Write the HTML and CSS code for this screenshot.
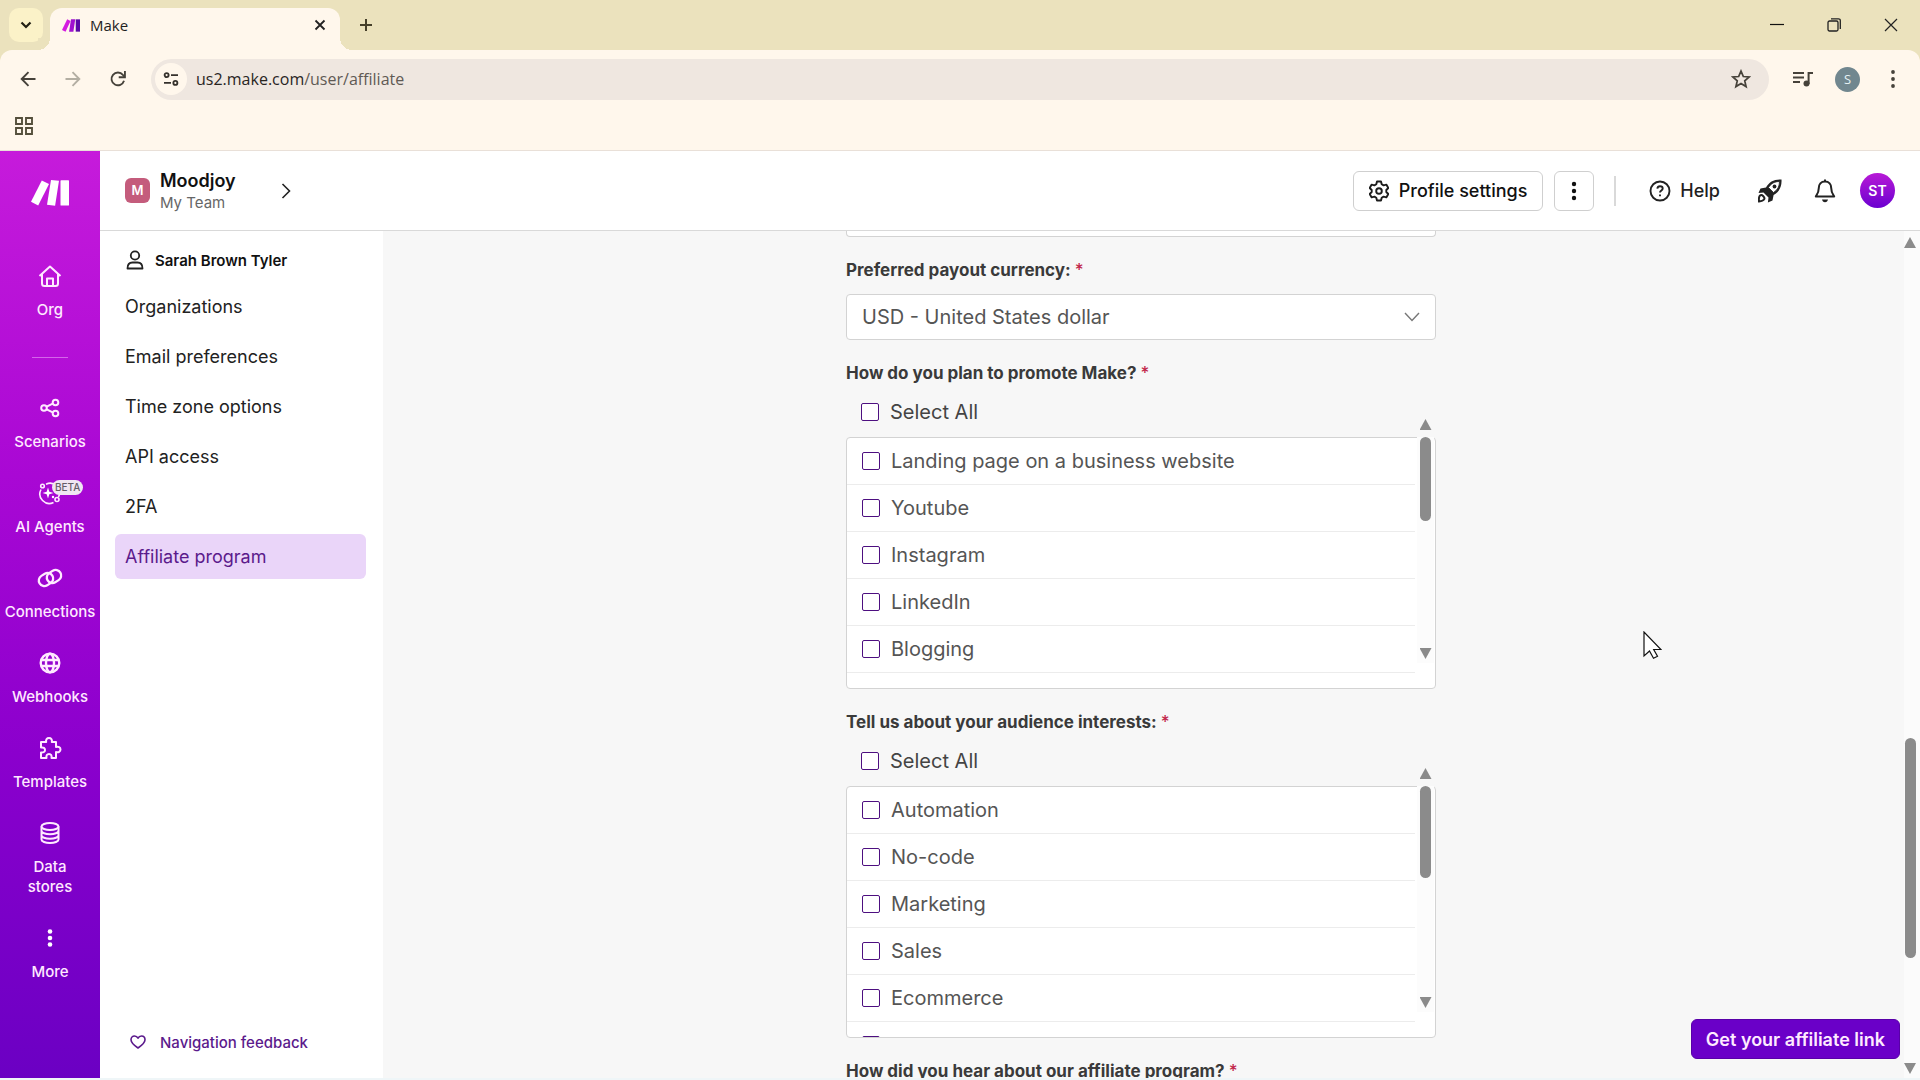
FILE: index.html
```html
<!DOCTYPE html>
<html lang="en">
<head>
<meta charset="utf-8">
<title>Make</title>
<link rel="stylesheet" href="styles.css">
</head>
<body>
<header class="browser">
  <div class="tabstrip">
    <button class="tab-search" aria-label="Search tabs"><svg width="12" height="8" viewBox="0 0 12 8"><path d="M1.500 1.500 6 6l4.500-4.500" fill="none" stroke="#222014" stroke-width="2.200"/></svg></button>
    <div class="tab">
      <svg width="18" height="13" viewBox="0 0 38 26"><path d="M11 0l7 3.500L7.500 26 0 22.500z" fill="#d41be0"/><path d="M19 0h9l-4 26h-9z" fill="#a010d0"/><path d="M29 0h9v26h-9z" fill="#5a08a8"/></svg>
      <span class="tab-title">Make</span>
      <button class="icon-btn" aria-label="Close tab"><svg width="12" height="12" viewBox="0 0 12 12"><path d="M1.500 1.500l9 9m0-9l-9 9" stroke="#222" stroke-width="1.800"/></svg></button>
    </div>
    <button class="icon-btn new-tab" aria-label="New tab"><svg width="14" height="14" viewBox="0 0 14 14"><path d="M7 1v12M1 7h12" stroke="#46402a" stroke-width="2"/></svg></button>
    <div class="window-controls">
      <button class="icon-btn" aria-label="Minimize"><svg width="14" height="14" viewBox="0 0 14 14"><path d="M0 6.500h14" stroke="#111" stroke-width="1.200"/></svg></button>
      <button class="icon-btn" aria-label="Restore"><svg width="14" height="14" viewBox="0 0 14 14"><rect x="1" y="3" width="10" height="10" rx="1.500" fill="none" stroke="#222" stroke-width="1.300"/><path d="M4 .8h7.500a1.800 1.800 0 0 1 1.800 1.800V11" fill="none" stroke="#222" stroke-width="1.300"/></svg></button>
      <button class="icon-btn" aria-label="Close"><svg width="14" height="14" viewBox="0 0 14 14"><path d="M1 1l12 12M13 1L1 13" stroke="#222" stroke-width="1.200"/></svg></button>
    </div>
  </div>
  <div class="toolbar">
    <button class="icon-btn" aria-label="Back"><svg width="16" height="16" viewBox="0 0 16 16"><path d="M15.500 8H2M8.500 1.200L1.700 8l6.800 6.800" fill="none" stroke="#46423a" stroke-width="1.900"/></svg></button>
    <button class="icon-btn" aria-label="Forward"><svg width="16" height="16" viewBox="0 0 16 16"><path d="M.5 8H14M7.500 1.200L14.300 8l-6.800 6.800" fill="none" stroke="#b3aea2" stroke-width="1.900"/></svg></button>
    <button class="icon-btn" aria-label="Reload"><svg width="16" height="16" viewBox="0 0 18 18"><path d="M15.800 11A7.200 7.200 0 1 1 14.500 4.300l2 2.200" fill="none" stroke="#46423a" stroke-width="2.100"/><path d="M16.800 0v7h-7" fill="none" stroke="#46423a" stroke-width="2.100"/></svg></button>
    <div class="omnibox">
      <button class="site-info" aria-label="Site information"><svg width="16" height="14" viewBox="0 0 18 16" fill="none" stroke="#35312c" stroke-width="2.100"><circle cx="4" cy="3.500" r="2.300"/><path d="M9 3.500h8M1 12.500h8"/><circle cx="14" cy="12.500" r="2.300"/></svg></button>
      <a class="url" href="#">us2.make.com<span>/user/affiliate</span></a>
      <button class="icon-btn" aria-label="Bookmark"><svg width="20" height="20" viewBox="0 0 24 24"><path d="M12 2.500l2.800 6.500 7 .6-5.300 4.600 1.600 6.900L12 17.400l-6.100 3.700 1.600-6.900L2.200 9.600l7-.6z" fill="none" stroke="#46423a" stroke-width="2.100"/></svg></button>
    </div>
    <button class="icon-btn" aria-label="Media"><svg width="20" height="16" viewBox="0 0 20 16"><path d="M0 2h11M0 6.500h11M0 11h7" stroke="#46423a" stroke-width="2"/><circle cx="13.500" cy="12.500" r="3" fill="#46423a"/><path d="M15.600 13V2H20" fill="none" stroke="#46423a" stroke-width="2"/></svg></button>
    <button class="profile" aria-label="Browser profile">S</button>
    <button class="icon-btn" aria-label="Browser menu"><svg width="6" height="20" viewBox="0 0 6 20" fill="#46423a"><circle cx="3" cy="3" r="1.900"/><circle cx="3" cy="10" r="1.900"/><circle cx="3" cy="17" r="1.900"/></svg></button>
  </div>
  <div class="bookmarks">
    <button class="icon-btn" aria-label="Apps"><svg width="18" height="18" viewBox="0 0 18 18" fill="none" stroke="#55503c" stroke-width="1.900"><path d="M1 1h6v6H1zM11 1h6v6h-6zM1 11h6v6H1zM11 11h6v6h-6z"/></svg></button>
  </div>
</header>

<div class="app">
  <nav class="rail" aria-label="Main">
    <a class="rail-logo" href="#" aria-label="Make"><svg width="38" height="26" viewBox="0 0 38 26" fill="#fff"><path d="M10.800.6l7.200 3.500L7.200 25.400 0 21.800z"/><path d="M20 0l8 .8-3.900 24.900-8.100-1z"/><rect x="29.500" y=".3" width="8.500" height="25.200" rx=".6"/></svg></a>
    <a class="rail-item" href="#"><svg width="24" height="24" viewBox="0 0 24 24"><path d="M1.500 12L12 2.500 22.500 12M4 10v9.500A2.500 2.500 0 0 0 6.500 22h11a2.500 2.500 0 0 0 2.500-2.500V10M9 22v-7.500h6V22"/></svg><span>Org</span></a>
    <hr class="rail-rule">
    <a class="rail-item" href="#"><svg width="24" height="24" viewBox="0 0 24 24"><circle cx="6" cy="12" r="2.800"/><circle cx="17.500" cy="6.500" r="2.800"/><circle cx="17.500" cy="17.500" r="2.800"/><path d="M8.700 10.700l6-3M8.700 13.300l6 3"/></svg><span>Scenarios</span></a>
    <a class="rail-item" href="#"><svg width="24" height="24" viewBox="0 0 24 24"><g stroke-width="1.600"><path d="M3 8.500A9.500 9.500 0 0 0 15.500 21.500M8 3.200A9.500 9.500 0 0 1 20.500 16"/><circle cx="4.500" cy="5" r="1.800"/><circle cx="19" cy="18.500" r="2"/></g><path d="M10 6.500l1.300 4.200L15.500 12l-4.200 1.300L10 17.500l-1.300-4.200L4.500 12l4.200-1.300z" fill="#fff" stroke="none"/><circle cx="15" cy="16" r="1.200" fill="#fff" stroke="none"/></svg><span>AI Agents</span><b class="beta">BETA</b></a>
    <a class="rail-item" href="#"><svg width="26" height="24" viewBox="0 0 26 24"><g stroke-width="2.300"><rect x="1.500" y="8" width="15" height="11" rx="5.500" transform="rotate(-32 9 13.500)"/><rect x="9.500" y="5" width="15" height="11" rx="5.500" transform="rotate(-32 17 10.500)"/></g></svg><span>Connections</span></a>
    <a class="rail-item" href="#"><svg width="24" height="24" viewBox="0 0 24 24"><g stroke-width="2.400"><circle cx="12" cy="12" r="9.300"/><ellipse cx="12" cy="12" rx="4" ry="9.300"/><path d="M3 9h18M3 15h18"/></g></svg><span>Webhooks</span></a>
    <a class="rail-item" href="#"><svg width="24" height="24" viewBox="0 0 24 24"><path d="M3 6h5.200C7.500 3.500 9 2 11 2s3.500 1.500 2.800 4H18v5c2.500-.7 4.500.5 4.500 2.500S20.500 16.700 18 16v6h-4.500c.5-2.500-.5-4-2.500-4s-3 1.500-2.500 4H3v-5.500c2.500.3 4-.8 4-2.500s-1.500-3-4-2.500z"/></svg><span>Templates</span></a>
    <a class="rail-item" href="#"><svg width="24" height="24" viewBox="0 0 24 24"><ellipse cx="12" cy="5.500" rx="8.500" ry="3.500"/><path d="M3.500 5.500v13c0 2 3.800 3.500 8.500 3.500s8.500-1.500 8.500-3.500v-13M3.500 9.800c0 2 3.800 3.500 8.500 3.500s8.500-1.500 8.500-3.500M3.500 14.200c0 2 3.800 3.500 8.500 3.500s8.500-1.500 8.500-3.500"/></svg><span>Data<br>stores</span></a>
    <a class="rail-item" href="#"><svg width="24" height="24" viewBox="0 0 24 24"><g fill="#fff" stroke="none"><circle cx="12" cy="5.500" r="2.300"/><circle cx="12" cy="12" r="2.300"/><circle cx="12" cy="18.500" r="2.300"/></g></svg><span>More</span></a>
  </nav>

  <div class="workspace">
    <header class="topbar">
      <div class="team-badge">M</div>
      <div class="team"><strong>Moodjoy</strong><span>My Team</span></div>
      <button class="icon-btn" aria-label="Open team menu"><svg width="10" height="16" viewBox="0 0 10 16"><path d="M1.500 1l7 7-7 7" fill="none" stroke="#222" stroke-width="1.600"/></svg></button>
      <div class="top-actions">
        <button class="outline-btn"><svg width="20" height="22" viewBox="0 0 20 22" fill="none" stroke="#1c1c1c" stroke-width="1.900" stroke-linejoin="round"><path d="M8 1.500h4l.7 2.800 1.900 1.100 2.700-.8 2 3.400-2 2v2l2 2-2 3.400-2.700-.8-1.900 1.100-.7 2.800H8l-.7-2.800-1.900-1.100-2.700.8-2-3.400 2-2v-2l-2-2 2-3.400 2.700.8 1.900-1.100z"/><circle cx="10" cy="11" r="2.800"/></svg>Profile settings</button>
        <button class="outline-btn square" aria-label="More options"><svg width="6" height="20" viewBox="0 0 6 20" fill="#111"><circle cx="3" cy="3" r="2.200"/><circle cx="3" cy="10" r="2.200"/><circle cx="3" cy="17" r="2.200"/></svg></button>
        <i class="top-rule"></i>
        <button class="help"><svg width="22" height="22" viewBox="0 0 22 22" fill="none" stroke="#222" stroke-width="1.900"><circle cx="11" cy="11" r="9.500"/><path d="M8.300 8.700C8.500 7 9.600 6.200 11 6.200c1.600 0 2.700 1 2.700 2.300 0 1.900-2.700 2-2.700 4"/><path d="M11 14.400v1.800"/></svg>Help</button>
        <button class="icon-btn rocket" aria-label="What's new"><svg width="24" height="24" viewBox="0 0 24 24"><path d="M23.500.5C16 0 11 3 8 8.500L2.500 9.500.5 14l5-.5 5 5-.6 5 4.600-2 1.100-5.500C21 13 24 8 23.500.5z" fill="#222"/><path d="M21.500 2.500c-5 0-8.500 2-11 6l5 5c4-2.500 6-6 6-11z" fill="#fff" stroke="#222" stroke-width=".8"/><circle cx="16.500" cy="7.500" r="1.900" fill="#222"/><path d="M2 16.500c2-1.500 5.500 2 4 4-1 1.500-5 2-5 2s-.5-4.500 1-6z" fill="#fff" stroke="#222" stroke-width="2"/></svg></button>
        <button class="icon-btn bell" aria-label="Notifications"><svg width="22" height="24" viewBox="0 0 22 24"><path d="M11 2.500c4 0 6.200 3 6.200 6.500 0 4.500 1.300 6 3 8.500H1.800c1.700-2.500 3-4 3-8.500 0-3.500 2.200-6.500 6.200-6.500zM11 .5v2" fill="none" stroke="#222" stroke-width="2" stroke-linejoin="round"/><path d="M8 20.500h6c-.3 1.600-1.400 2.700-3 2.700s-2.700-1.100-3-2.700z" fill="#222"/></svg></button>
        <button class="avatar" aria-label="Account">ST</button>
      </div>
    </header>

    <div class="body">
      <aside class="side">
        <div class="user"><svg width="18" height="20" viewBox="0 0 18 20" fill="none" stroke="#222" stroke-width="1.800"><circle cx="9" cy="5.500" r="4.200"/><path d="M1.500 18.500c0-4 2-6 5-6h5c3 0 5 2 5 6z" stroke-linejoin="round"/></svg>Sarah Brown Tyler</div>
        <nav class="side-nav" aria-label="Profile">
          <a href="#">Organizations</a>
          <a href="#">Email preferences</a>
          <a href="#">Time zone options</a>
          <a href="#">API access</a>
          <a href="#">2FA</a>
          <a href="#" class="active">Affiliate program</a>
        </nav>
        <a class="feedback" href="#"><svg width="16" height="14" viewBox="0 0 16 14"><path d="M8 13C3 9.500 1 7.500 1 4.700 1 2.500 2.600 1 4.500 1 6 1 7.300 1.800 8 3.200 8.700 1.800 10 1 11.500 1 13.400 1 15 2.500 15 4.700 15 7.500 13 9.500 8 13z" fill="none" stroke="#5b1a8c" stroke-width="1.600" stroke-linejoin="round"/></svg>Navigation feedback</a>
      </aside>

      <main class="content">
        <form class="form">
          <div class="field-end"></div>

          <div class="field">
            <label class="title" for="currency">Preferred payout currency:<em>*</em></label>
            <div class="select-wrap">
              <select id="currency"><option>USD - United States dollar</option></select>
              <svg width="16" height="10" viewBox="0 0 16 10"><path d="M1 1l7 7.500L15 1" fill="none" stroke="#777" stroke-width="1.400"/></svg>
            </div>
          </div>

          <fieldset class="field">
            <legend class="title">How do you plan to promote Make?<em>*</em></legend>
            <label class="all"><input type="checkbox">Select All</label>
            <div class="list-wrap">
              <div class="list">
                <label><input type="checkbox">Landing page on a business website</label>
                <label><input type="checkbox">Youtube</label>
                <label><input type="checkbox">Instagram</label>
                <label><input type="checkbox">LinkedIn</label>
                <label><input type="checkbox">Blogging</label>
              </div>
              <div class="bar"><i class="up"></i><i class="thumb"></i><i class="down"></i></div>
            </div>
          </fieldset>

          <fieldset class="field">
            <legend class="title">Tell us about your audience interests:<em>*</em></legend>
            <label class="all"><input type="checkbox">Select All</label>
            <div class="list-wrap">
              <div class="list">
                <label><input type="checkbox">Automation</label>
                <label><input type="checkbox">No-code</label>
                <label><input type="checkbox">Marketing</label>
                <label><input type="checkbox">Sales</label>
                <label><input type="checkbox">Ecommerce</label>
                <label><input type="checkbox" aria-label="Other"></label>
              </div>
              <div class="bar"><i class="up"></i><i class="thumb tall"></i><i class="down"></i></div>
            </div>
          </fieldset>

          <div class="field"><div class="title">How did you hear about our affiliate program?<em>*</em></div></div>
        </form>
        <button class="cta">Get your affiliate link</button>
      </main>
      <div class="page-scroll"><i class="up"></i><i class="track"></i><i class="thumb"></i><i class="track-end"></i><i class="down"></i></div>
    </div>
  </div>
</div>
<svg class="cursor" width="19" height="28" viewBox="0 0 19 28"><path d="M1 1v24l5.500-5 4 7.200 4-2L10.700 18.500H18z" fill="#fff" stroke="#111" stroke-width="1.200"/></svg>
</body>
</html>
```
FILE: styles.css
```css
* { box-sizing: border-box; }
body {
  margin: 0;
  height: 100vh;
  overflow: hidden;
  display: flex;
  flex-direction: column;
  font-family: Inter, "Liberation Sans", sans-serif;
  color: #1f1f1f;
  background: #fff;
}
button { font: inherit; color: inherit; border: 0; padding: 0; background: none; }
a { color: inherit; text-decoration: none; }
svg { display: block; flex: none; }
em { font-style: normal; }
.icon-btn { display: flex; flex: none; align-items: center; justify-content: center; }

/* Browser frame */
.browser { flex: none; background: #ebe2bd; border-bottom: 1px solid #e9e0d8; font-family: "Open Sans", "Noto Sans", sans-serif; }
.tabstrip { display: flex; align-items: center; height: 50px; }
.tab-search { display: flex; align-items: center; justify-content: center; width: 34px; height: 34px; margin-left: 9px; border-radius: 10px; background: #fbf2c8; }
.tab { position: relative; display: flex; align-items: center; align-self: flex-end; width: 290px; height: 42px; margin-left: 7px; padding: 0 14px 8px 12px; border-radius: 12px 12px 0 0; background: #fff7ec; }
.tab::before, .tab::after { content: ""; position: absolute; bottom: 0; width: 12px; height: 12px; }
.tab::before { left: -12px; background: radial-gradient(circle at 0 0, #ebe2bd 12px, #fff7ec 12px); }
.tab::after { right: -12px; background: radial-gradient(circle at 100% 0, #ebe2bd 12px, #fff7ec 12px); }
.tab-title { flex: 1; margin-left: 10px; font-size: 15px; line-height: 20px; }
.new-tab { margin-left: 19px; }
.window-controls { display: flex; gap: 43px; margin-left: auto; padding-right: 22px; }
.toolbar { display: flex; align-items: center; height: 58px; padding: 0 24px 0 20px; background: #fff7ec; border-radius: 12px 12px 0 0; }
.toolbar > .icon-btn:nth-child(2), .toolbar > .icon-btn:nth-child(3) { margin-left: 29px; }
.omnibox { flex: 1; display: flex; align-items: center; height: 41px; margin: 0 24px 0 25px; padding: 0 18px 0 4px; border-radius: 21px; background: #efe7e0; }
.site-info { display: flex; align-items: center; justify-content: center; width: 32px; height: 32px; border-radius: 50%; background: #fff7ec; }
.url { flex: 1; margin-left: 9px; font-size: 16px; line-height: 24px; color: #29251f; }
.url span { color: #5f5a54; }
.profile { width: 25px; height: 25px; margin: 0 30px 0 22px; border-radius: 50%; background: #71878f; color: #e6f2f4; font-size: 13px; }
.bookmarks { display: flex; align-items: center; height: 42px; padding: 0 15px 7px; background: #fff7ec; }

/* App frame */
.app { flex: 1; min-height: 0; display: flex; border-bottom: 2px solid #eff6f8; }
.rail { flex: none; width: 100px; display: flex; flex-direction: column; align-items: center; gap: 29px; padding-top: 29px; background: linear-gradient(#c61bdb, #a908d4 35%, #8b00cd 65%, #6b00c3); color: #ffe9ff; }
.rail-logo { margin-bottom: 29px; }
.rail-item { position: relative; display: flex; flex-direction: column; align-items: center; gap: 12px; font-size: 15px; font-weight: 500; line-height: 20px; text-align: center; }
.rail-item > svg { fill: none; stroke: #ffe9ff; stroke-width: 2; stroke-linejoin: round; }
.rail-rule { width: 36px; height: 1px; margin: 8px 0 9px; border: 0; background: #d565ea; }
.beta { position: absolute; left: 50%; top: -1px; margin-left: 2px; padding: 0 3px; border-radius: 8px; background: #f0e6f2; color: #665d68; font-size: 10px; font-weight: 500; line-height: 15px; }
.workspace { flex: 1; min-width: 0; display: flex; flex-direction: column; }
.topbar { flex: none; display: flex; align-items: center; height: 80px; padding: 0 25px; border-bottom: 1px solid #d9d9d9; background: #fff; }
.team-badge { width: 25px; height: 25px; border-radius: 6px; background: #c45c7c; color: #fff; font-size: 13px; font-weight: 600; line-height: 25px; text-align: center; }
.team { display: flex; flex-direction: column; width: 121px; margin-left: 10px; padding-top: 2px; }
.team strong { font-size: 18px; font-weight: 600; line-height: 22px; color: #111; }
.team span { font-size: 15px; line-height: 22px; color: #666; }
.top-actions { display: flex; align-items: center; margin-left: auto; }
.outline-btn { display: flex; align-items: center; justify-content: center; gap: 10px; height: 40px; padding: 0 15px; border: 1px solid #cfcfcf; border-radius: 6px; background: #fff; color: #111; font-size: 18px; font-weight: 500; }
.square { width: 40px; margin-left: 11px; padding: 0; }
.top-rule { width: 2px; height: 30px; margin: 0 33px 0 20px; background: #d9d9d9; }
.help { display: flex; align-items: center; gap: 9px; font-size: 18px; font-weight: 500; }
.rocket { margin-left: 38px; }
.bell { margin: 0 24px 0 32px; }
.avatar { width: 35px; height: 35px; border-radius: 50%; background: linear-gradient(#b81ad6, #6b00d0); color: #fff; font-size: 14px; font-weight: 600; }

.body { flex: 1; min-height: 0; display: flex; background: #f7f7f7; }
.side { flex: none; width: 283px; display: flex; flex-direction: column; padding: 17px 17px 24px 15px; background: #fff; }
.user { display: flex; align-items: center; gap: 11px; height: 24px; padding-left: 11px; font-size: 15px; font-weight: 600; color: #111; }
.side-nav { display: flex; flex-direction: column; gap: 5px; margin-top: 12px; }
.side-nav a { height: 45px; padding: 0 10px; border-radius: 6px; font-size: 18px; line-height: 45px; color: #222; }
.side-nav .active { background: #ead5f9; color: #5b1a8c; }
.feedback { display: flex; align-items: center; gap: 14px; height: 24px; margin-top: auto; padding-left: 15px; font-size: 15px; font-weight: 500; color: #5b1a8c; }

/* Form */
.content { position: relative; flex: 1; min-width: 0; overflow: hidden; padding-right: 5px; }
.form { width: 590px; margin: 0 auto; }
.field-end { height: 6px; border: 1px solid #d3d3d3; border-top: 0; border-radius: 0 0 4px 4px; background: #fff; }
.field { min-width: 0; margin: 21px 0 0; padding: 0; border: 0; }
.title { display: block; padding: 0; font-size: 17px; font-weight: 700; line-height: 24px; color: #3a3a3a; }
.title em { margin-left: 4px; color: #c2274b; font-weight: 500; }
.select-wrap { position: relative; margin-top: 12px; }
select { display: block; width: 100%; height: 46px; padding: 0 15px; appearance: none; border: 1px solid #d3d3d3; border-radius: 4px; background: #fff; color: #555; font: 20px Inter, sans-serif; }
.select-wrap svg { position: absolute; right: 16px; top: 18px; pointer-events: none; }
.all { display: flex; align-items: center; height: 24px; margin-top: 15px; padding-left: 15px; font-size: 20px; color: #444; }
input[type="checkbox"] { flex: none; appearance: none; width: 18px; height: 18px; margin: 0 11px 0 0; border: 1px solid #4d0f80; border-radius: 2px; background: #fff; }
.list-wrap { position: relative; margin-top: 13px; }
.list { height: 252px; overflow: hidden; border: 1px solid #d3d3d3; border-radius: 4px; background: #fff; }
.list label { display: flex; align-items: center; height: 47px; margin-right: 20px; padding-left: 15px; border-bottom: 1px solid #ececec; font-size: 20px; color: #555; }
.bar { position: absolute; right: 2px; top: -22px; width: 17px; height: 248px; display: flex; flex-direction: column; align-items: center; padding: 4px 0; background: linear-gradient(#f7f7f7 22px, #fcfcfc 22px); }
.up, .down { flex: none; width: 12px; height: 11px; background: #8b8b8b; }
.up { clip-path: polygon(50% 0, 100% 100%, 0 100%); }
.down { clip-path: polygon(0 0, 100% 0, 50% 100%); }
.thumb { flex: none; width: 11px; border-radius: 6px; background: #8b8b8b; }
.bar .thumb { height: 84px; margin: 7px 0 auto; }
.bar .tall { height: 92px; }
.page-scroll { flex: none; display: flex; flex-direction: column; align-items: center; width: 16px; padding: 6px 4px 4px 0; background: #fbfbfb; }
.page-scroll .thumb { height: 220px; }
.track { flex: 491; }
.track-end { flex: 105; }
.cta { position: absolute; right: 4px; bottom: 19px; height: 40px; padding: 0 14px; border: 1px solid #5800a8; border-radius: 6px; background: #6a00c8; color: #ffeaff; font-size: 18px; font-weight: 600; }
.cursor { position: absolute; left: 1643px; top: 631px; }
```
